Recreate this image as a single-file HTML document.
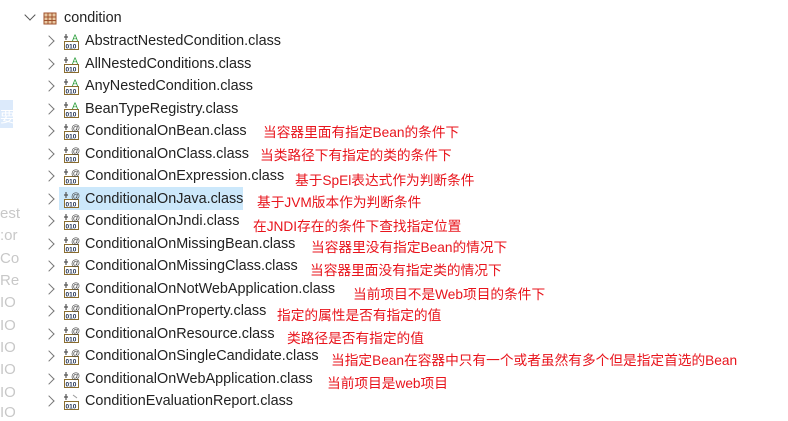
<!DOCTYPE html>
<html><head><meta charset="utf-8"><style>
body{margin:0;width:788px;height:415px;background:#fff;position:relative;overflow:hidden;font-family:"Liberation Sans","Noto Sans CJK SC",sans-serif}
.r{position:absolute;left:0;height:22px;line-height:22px;font-size:14.4px;color:#222}
.ch{position:absolute;left:45px;top:0;width:7px;height:7px;border-right:1.3px solid #777;border-bottom:1.3px solid #777;transform:translateY(7px) rotate(-45deg)}
.ic{position:absolute;left:63px;top:3px}
.t{position:absolute;left:85px;top:0;white-space:nowrap}
.a{position:absolute;color:#e8141c;font-size:13.7px;white-space:nowrap;line-height:18px}
.hl{position:absolute;left:59px;top:187px;width:184px;height:23px;background:#cce8fb}
.lf{position:absolute;left:0;color:#c8c8c8;font-size:15px}
</style></head><body>
<div class="hl"></div>
<div style="position:absolute;left:0;top:100px;width:13px;height:28px;background:#dceafb"></div>
<div class="lf" style="top:106px;color:#fff;">要</div>
<div class="lf" style="top:205px">est</div>
<div class="lf" style="top:227px">:or</div>
<div class="lf" style="top:250px">Co</div>
<div class="lf" style="top:272px">Re</div>
<div class="lf" style="top:294px">IO</div>
<div class="lf" style="top:317px">IO</div>
<div class="lf" style="top:339px">IO</div>
<div class="lf" style="top:361px">IO</div>
<div class="lf" style="top:384px">IO</div>
<div class="lf" style="top:404px">IO</div>

<div class="r" style="top:7px"><div style="position:absolute;left:26px;top:4px;width:7px;height:7px;border-right:1.3px solid #555;border-bottom:1.3px solid #555;transform:rotate(45deg)"></div>
<svg style="position:absolute;left:43px;top:5px" width="14" height="13"><rect x="1" y="1" width="12" height="11" fill="#e9c9a3" stroke="#a0522d"/><path d="M5 1V12M9 1V12M1 5H13M1 8.5H13" stroke="#a0522d"/></svg>
<span class="t" style="left:64px">condition</span></div>

<div id="rows"></div>
<script>
var rows=[["AbstractNestedCondition.class","A"],["AllNestedConditions.class","A"],["AnyNestedCondition.class","A"],["BeanTypeRegistry.class","A"],["ConditionalOnBean.class","@"],["ConditionalOnClass.class","@"],["ConditionalOnExpression.class","@"],["ConditionalOnJava.class","@"],["ConditionalOnJndi.class","@"],["ConditionalOnMissingBean.class","@"],["ConditionalOnMissingClass.class","@"],["ConditionalOnNotWebApplication.class","@"],["ConditionalOnProperty.class","@"],["ConditionalOnResource.class","@"],["ConditionalOnSingleCandidate.class","@"],["ConditionalOnWebApplication.class","@"],["ConditionEvaluationReport.class",""]];
var h="";
rows.forEach(function(r,i){var y=30+i*22.5;
var mark=r[1]=="A"?'<text x="9" y="8" font-size="9" fill="#2a9d3a" font-family="Liberation Sans">A</text>':(r[1]=="@"?'<text x="8" y="8" font-size="9" fill="#444" font-family="Liberation Sans">@</text>':'<path d="M10 2l4 3" stroke="#999"/>');
h+='<div class="r" style="top:'+y+'px"><div class="ch"></div><svg class="ic" width="17" height="17"><path d="M3 1V7M1 4H5" stroke="#555" stroke-width="1.2"/><rect x="1.5" y="8.5" width="14" height="8" fill="#fff" stroke="#8a6d2f"/><text x="2.5" y="15.5" font-size="6.5" fill="#235" font-family="Liberation Sans" font-weight="bold">010</text>'+mark+'</svg><span class="t">'+r[0]+'</span></div>';});
document.getElementById("rows").innerHTML=h;
</script>
<div class="a" style="left:263px;top:124px">当容器里面有指定Bean的条件下</div>
<div class="a" style="left:260px;top:147px">当类路径下有指定的类的条件下</div>
<div class="a" style="left:295px;top:172px">基于SpEl表达式作为判断条件</div>
<div class="a" style="left:257px;top:194px">基于JVM版本作为判断条件</div>
<div class="a" style="left:253px;top:218px">在JNDI存在的条件下查找指定位置</div>
<div class="a" style="left:311px;top:239px">当容器里没有指定Bean的情况下</div>
<div class="a" style="left:310px;top:262px">当容器里面没有指定类的情况下</div>
<div class="a" style="left:353px;top:286px">当前项目不是Web项目的条件下</div>
<div class="a" style="left:277px;top:307px">指定的属性是否有指定的值</div>
<div class="a" style="left:287px;top:330px">类路径是否有指定的值</div>
<div class="a" style="left:331px;top:352px">当指定Bean在容器中只有一个或者虽然有多个但是指定首选的Bean</div>
<div class="a" style="left:327px;top:375px">当前项目是web项目</div>
</body></html>
